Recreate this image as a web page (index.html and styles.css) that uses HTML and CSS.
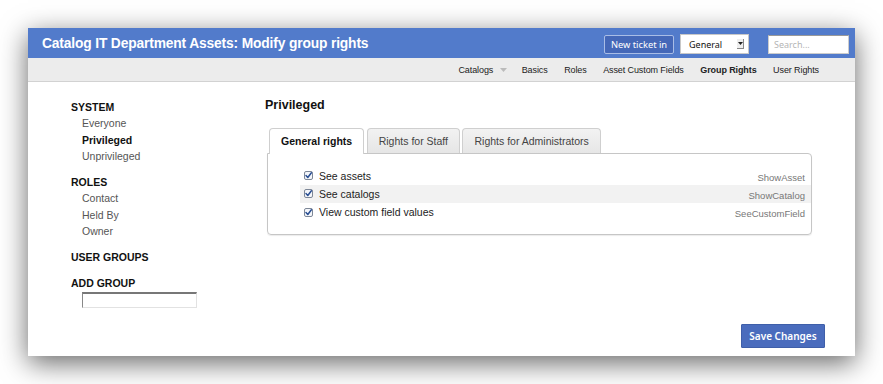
FILE: index.html
```html
<!DOCTYPE html>
<html>
<head>
<meta charset="utf-8">
<title>Modify group rights</title>
<link rel="stylesheet" href="styles.css">
</head>
<body>
<div class="window">
  <header class="topbar">
    <h1 class="title">Catalog IT Department Assets: Modify group rights</h1>
    <div class="top-actions">
      <button class="btn-new">New ticket in</button>
      <div class="select"><span class="select-text">General</span><span class="select-arrow"><svg width="5" height="3" viewBox="0 0 5 3"><path d="M0 0h5L2.5 3z" fill="#222"/></svg></span></div>
      <input class="search" type="text" placeholder="Search...">
    </div>
  </header>
  <nav class="subnav">
    <a class="nav-item">Catalogs<svg class="caret" width="7" height="4" viewBox="0 0 7 4"><path d="M0 0h7L3.5 4z" fill="#bbb"/></svg></a>
    <a class="nav-item">Basics</a>
    <a class="nav-item">Roles</a>
    <a class="nav-item">Asset Custom Fields</a>
    <a class="nav-item active">Group Rights</a>
    <a class="nav-item">User Rights</a>
  </nav>
  <div class="content">
    <aside class="sidebar">
      <div class="group">
        <div class="group-title">SYSTEM</div>
        <div class="group-item">Everyone</div>
        <div class="group-item current">Privileged</div>
        <div class="group-item">Unprivileged</div>
      </div>
      <div class="group">
        <div class="group-title">ROLES</div>
        <div class="group-item">Contact</div>
        <div class="group-item">Held By</div>
        <div class="group-item">Owner</div>
      </div>
      <div class="group">
        <div class="group-title">USER GROUPS</div>
      </div>
      <div class="group">
        <div class="group-title">ADD GROUP</div>
        <input class="add-input" type="text">
      </div>
    </aside>
    <main class="main">
      <h2 class="heading">Privileged</h2>
      <div class="tabs">
        <div class="tab active">General rights</div>
        <div class="tab">Rights for Staff</div>
        <div class="tab">Rights for Administrators</div>
      </div>
      <div class="panel">
        <div class="row">
          <label class="check"><svg class="cb" width="9" height="9" viewBox="0 0 9 9"><rect x="0.5" y="0.5" width="8" height="8" rx="1.5" fill="#f4f6fa" stroke="#7d8797"/><path d="M2 4.6l1.8 1.9L7.4 1.8" fill="none" stroke="#2a4f93" stroke-width="1.5" stroke-linecap="round" stroke-linejoin="round"/></svg>See assets</label>
          <span class="right-name">ShowAsset</span>
        </div>
        <div class="row alt">
          <label class="check"><svg class="cb" width="9" height="9" viewBox="0 0 9 9"><rect x="0.5" y="0.5" width="8" height="8" rx="1.5" fill="#f4f6fa" stroke="#7d8797"/><path d="M2 4.6l1.8 1.9L7.4 1.8" fill="none" stroke="#2a4f93" stroke-width="1.5" stroke-linecap="round" stroke-linejoin="round"/></svg>See catalogs</label>
          <span class="right-name">ShowCatalog</span>
        </div>
        <div class="row">
          <label class="check"><svg class="cb" width="9" height="9" viewBox="0 0 9 9"><rect x="0.5" y="0.5" width="8" height="8" rx="1.5" fill="#f4f6fa" stroke="#7d8797"/><path d="M2 4.6l1.8 1.9L7.4 1.8" fill="none" stroke="#2a4f93" stroke-width="1.5" stroke-linecap="round" stroke-linejoin="round"/></svg>View custom field values</label>
          <span class="right-name">SeeCustomField</span>
        </div>
      </div>
    </main>
  </div>
  <div class="footer">
    <button class="btn-save">Save Changes</button>
  </div>
</div>
</body>
</html>
```

FILE: styles.css
```css
html, body {
  margin: 0;
  padding: 0;
  background: #ffffff;
}
body {
  padding: 28px 0 0 28px;
  height: 384px;
  box-sizing: border-box;
  overflow: hidden;
  font-family: "Liberation Sans", Arial, sans-serif;
  color: #222;
}
.window {
  width: 827px;
  height: 328px;
  background: #fff;
  box-shadow: 0 7px 26px rgba(0, 0, 0, 0.6);
  display: flex;
  flex-direction: column;
}
.topbar {
  height: 30px;
  background: #527bcb;
  display: flex;
  align-items: center;
  padding: 0 6px 0 14px;
}
.title {
  margin: 0;
  font-size: 13.8px;
  font-weight: bold;
  color: #fff;
  line-height: 30px;
  padding-top: 1px;
  letter-spacing: -0.15px;
}
.top-actions {
  margin-left: auto;
  display: flex;
  align-items: center;
  padding-top: 2px;
}
.btn-new {
  width: 70px;
  height: 19px;
  padding: 0;
  background: #4568b8;
  border: 1px solid #a9bde6;
  border-radius: 2px;
  color: #fff;
  font-family: "Noto Sans", sans-serif;
  font-size: 9.3px;
  line-height: 17px;
}
.select {
  margin-left: 6px;
  width: 69px;
  height: 20px;
  box-sizing: border-box;
  background: #fff;
  border: 1px solid #c8c8c8;
  display: flex;
  align-items: center;
  padding-left: 8px;
}
.select-text {
  font-family: "Noto Sans", sans-serif;
  font-size: 9px;
  color: #111;
}
.select-arrow {
  margin-left: auto;
  margin-right: 4px;
  width: 6px;
  height: 9px;
  border: 1px solid #888;
  border-width: 0 1px 1px 0;
  background: #eee;
  display: flex;
  align-items: center;
  justify-content: center;
}
.search {
  margin-left: 19px;
  width: 81px;
  height: 19px;
  box-sizing: border-box;
  border: 1px solid #ccc;
  border-top-color: #999;
  padding: 0 0 0 5px;
  font-family: "Noto Sans", sans-serif;
  font-size: 9px;
  outline: none;
}
.search::placeholder {
  color: #b5b5b5;
}
.subnav {
  height: 23px;
  background: #ececec;
  border-bottom: 1px solid #d2d2d2;
  display: flex;
  justify-content: flex-end;
  align-items: center;
  gap: 16.5px;
  padding-right: 36px;
}
.nav-item {
  font-size: 9px;
  color: #222;
  display: flex;
  align-items: center;
  letter-spacing: -0.1px;
}
.nav-item.active {
  font-weight: bold;
}
.caret {
  margin-left: 7px;
  margin-right: -2px;
}
.content {
  flex: 1;
  display: flex;
}
.sidebar {
  width: 194px;
  padding: 18px 0 0 43px;
}
.group {
  margin-bottom: 10.5px;
}
.group-title {
  font-size: 10.5px;
  font-weight: bold;
  line-height: 15px;
  color: #111;
}
.group-item {
  font-size: 10.5px;
  line-height: 16.5px;
  color: #555;
  padding-left: 11px;
}
.group-item.current {
  font-weight: bold;
  color: #111;
}
.add-input {
  display: block;
  margin: 1px 0 0 11px;
  width: 115px;
  height: 16px;
  box-sizing: border-box;
  border: 1px solid #e2e2e2;
  border-top: 2px solid #777;
  border-left: 1px solid #888;
  padding: 0;
}
.main {
  flex: 1;
  padding: 16px 43px 0 0;
}
.heading {
  margin: 0 0 15px 0;
  font-size: 12.5px;
  font-weight: bold;
  line-height: 15px;
  color: #111;
}
.tabs {
  display: flex;
  gap: 2.5px;
  margin: 0 0 -1px 4px;
}
.tab {
  height: 25px;
  box-sizing: border-box;
  padding: 0 11px;
  border: 1px solid #cfcfcf;
  border-bottom: none;
  border-radius: 4px 4px 0 0;
  background: linear-gradient(#f2f2f2, #e6e6e6);
  font-size: 10.5px;
  line-height: 24px;
  color: #444;
}
.tab.active {
  background: #fff;
  color: #111;
  font-weight: bold;
  position: relative;
  z-index: 1;
  height: 26px;
}
.panel {
  margin-left: 2px;
  border: 1px solid #c6c6c6;
  border-radius: 0 4px 4px 4px;
  box-shadow: 0 1px 1px rgba(0, 0, 0, 0.08);
  padding: 12.5px 0 12.5px 32px;
}
.row {
  height: 18.3px;
  display: flex;
  align-items: center;
  padding: 0 6px 0 4px;
}
.row.alt {
  background: #f2f2f2;
}
.check {
  display: flex;
  align-items: center;
  font-size: 10.5px;
  color: #222;
}
.cb {
  margin-right: 6px;
}
.right-name {
  margin-left: auto;
  font-size: 9.5px;
  color: #777;
  padding-top: 3px;
}
.footer {
  display: flex;
  justify-content: flex-end;
  padding: 0 30px 8px 0;
}
.btn-save {
  width: 84px;
  height: 24px;
  padding: 0;
  background: #4a6cbd;
  border: 1px solid #3f5fa9;
  border-radius: 1px;
  color: #fff;
  font-family: "Noto Sans", sans-serif;
  font-size: 10px;
  font-weight: 600;
}
```
